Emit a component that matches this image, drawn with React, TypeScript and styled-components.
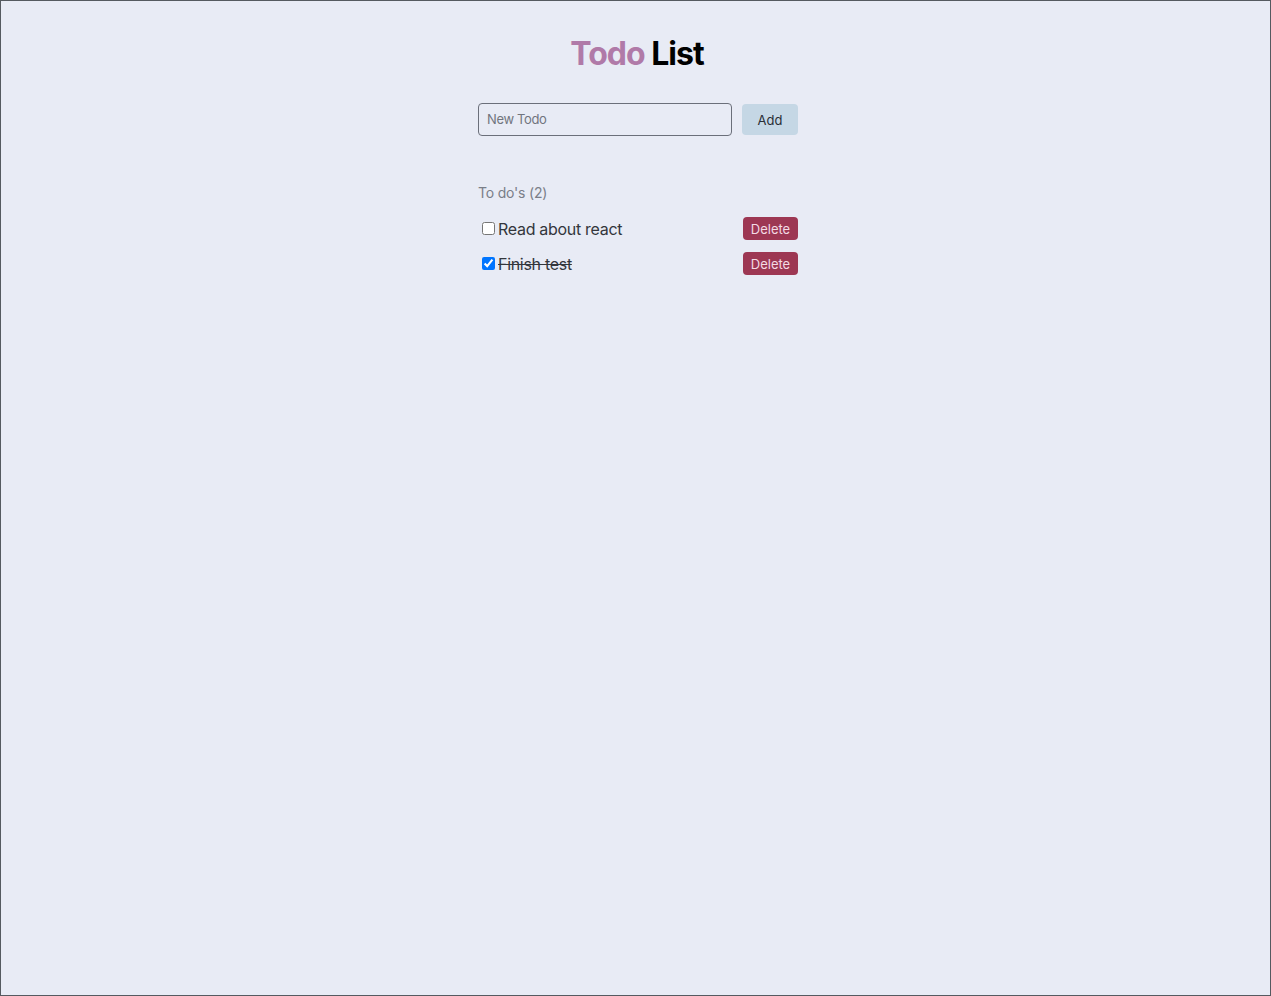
import React, { useState } from "react";
import styled, { createGlobalStyle } from "styled-components";

const GlobalStyle = createGlobalStyle`
  html, body { margin: 0; padding: 0; }
  body {
    font-family: Inter, "Noto Sans", sans-serif;
    background: #e8ebf5;
  }
  * { box-sizing: border-box; }
`;

const Page = styled.div`
  min-height: 100vh;
  border: 1px solid #555a60;
  background: #e8ebf5;
  padding-top: 33px;
  padding-left: 5px;
`;

const Container = styled.main`
  width: 320px;
  margin: 0 auto;
  display: flex;
  flex-direction: column;
`;

const Title = styled.h1`
  margin: 0;
  padding-right: 2px;
  text-align: center;
  font-size: 32px;
  font-weight: 700;
  letter-spacing: -1px;
  color: #000;
  line-height: 39px;
`;

const Accent = styled.span`
  color: #b07aa8;
`;

const Form = styled.form`
  display: flex;
  align-items: center;
  gap: 10px;
  margin-top: 30px;
`;

const Input = styled.input`
  flex: 0 0 254px;
  height: 33px;
  padding: 0 8px 1px;
  border: 1px solid #6b6f7a;
  border-radius: 4px;
  background: transparent;
  font-family: Inter, sans-serif;
  font-size: 13px;
  letter-spacing: -0.35px;
  color: #333;
  &::placeholder { color: #71757e; }
  outline: none;
`;

const AddButton = styled.button`
  width: 56px;
  height: 31px;
  border: none;
  border-radius: 4px;
  background: #c5d7e5;
  color: #2a2f36;
  font-family: Inter, sans-serif;
  font-size: 13px;
  cursor: pointer;
`;

const Section = styled.section`
  display: flex;
  flex-direction: column;
`;

const Heading = styled.h2`
  margin: 48px 0 0;
  font-size: 14px;
  font-weight: 400;
  letter-spacing: -0.2px;
  color: #7a7e88;
  line-height: 17px;
`;

const List = styled.ul`
  list-style: none;
  margin: 16px 0 0;
  padding: 0;
  display: flex;
  flex-direction: column;
  gap: 12px;
`;

const Row = styled.li`
  display: flex;
  align-items: center;
  justify-content: space-between;
  height: 23px;
`;

const Label = styled.label<{ $done: boolean }>`
  display: flex;
  align-items: center;
  font-size: 16px;
  letter-spacing: -0.3px;
  color: #33363c;
  text-decoration: ${(p) => (p.$done ? "line-through" : "none")};
`;

const Check = styled.input`
  margin: 3px 3px 3px 4px;
  width: 13px;
  height: 13px;
`;

const DeleteButton = styled.button`
  width: 55px;
  height: 23px;
  border: none;
  border-radius: 4px;
  background: #9d3753;
  color: #f3dbe4;
  font-family: Inter, sans-serif;
  font-size: 13px;
  padding: 0;
  cursor: pointer;
`;

type Todo = { id: number; text: string; done: boolean };

export default function App() {
  const [todos, setTodos] = useState<Todo[]>([
    { id: 1, text: "Read about react", done: false },
    { id: 2, text: "Finish test", done: true },
  ]);
  const [value, setValue] = useState("");

  return (
    <>
      <GlobalStyle />
      <Page>
        <Container>
          <Title>
            <Accent>Todo</Accent> List
          </Title>
          <Form
            onSubmit={(e) => {
              e.preventDefault();
              if (!value.trim()) return;
              setTodos([...todos, { id: Date.now(), text: value, done: false }]);
              setValue("");
            }}
          >
            <Input
              placeholder="New Todo"
              value={value}
              onChange={(e) => setValue(e.target.value)}
            />
            <AddButton type="submit">Add</AddButton>
          </Form>
          <Section>
            <Heading>To do's ({todos.length})</Heading>
            <List>
              {todos.map((t) => (
                <Row key={t.id}>
                  <Label $done={t.done}>
                    <Check
                      type="checkbox"
                      checked={t.done}
                      onChange={() =>
                        setTodos(todos.map((x) => (x.id === t.id ? { ...x, done: !x.done } : x)))
                      }
                    />
                    {t.text}
                  </Label>
                  <DeleteButton onClick={() => setTodos(todos.filter((x) => x.id !== t.id))}>
                    Delete
                  </DeleteButton>
                </Row>
              ))}
            </List>
          </Section>
        </Container>
      </Page>
    </>
  );
}
